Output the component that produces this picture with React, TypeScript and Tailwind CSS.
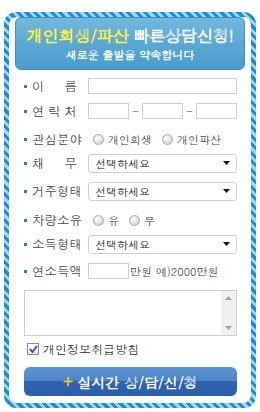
import type { ReactNode } from "react";

const KR = "font-['Dotum','Noto_Sans_CJK_KR','Noto_Sans',sans-serif]";

function Label({ chars }: { chars: string[] }) {
  return (
    <div className="flex w-[64px] shrink-0 items-center">
      <span className="mr-[5px] h-[3px] w-[3px] bg-[#2b7fc7]" />
      <span className="flex w-[45px] justify-between text-[12.5px] leading-none text-[#484848]">
        {chars.map((c, i) => (
          <span key={i}>{c}</span>
        ))}
      </span>
    </div>
  );
}

function Row({ chars, mt, children }: { chars: string[]; mt: string; children: ReactNode }) {
  return (
    <div className={`flex h-[20px] items-center ${mt}`}>
      <Label chars={chars} />
      <div className="flex flex-1 items-center">{children}</div>
    </div>
  );
}

function TextBox({ w }: { w: string }) {
  return <div className={`h-[16px] border border-[#cfcfcf] bg-white ${w}`} />;
}

function Select() {
  return (
    <div className="flex h-[19px] w-full items-center justify-between rounded-[3px] border border-[#cfcfcf] bg-white pl-[6px] pr-[6px]">
      <span className="text-[11px] leading-none text-[#222]">선택하세요</span>
      <svg width="7" height="4" viewBox="0 0 7 4">
        <path d="M0 0h7L3.5 4z" fill="#111" />
      </svg>
    </div>
  );
}

function Radio({ label, gap }: { label: string; gap?: string }) {
  return (
    <div className={`flex items-center ${gap ?? ""}`}>
      <span className="h-[11px] w-[11px] rounded-full border border-[#a8a8a8] bg-[radial-gradient(circle_at_40%_35%,#ffffff,#d8d8d8_70%,#bdbdbd)]" />
      <span className="ml-[4px] text-[11px] leading-none text-[#444]">{label}</span>
    </div>
  );
}

export default function App() {
  return (
    <div className={`relative h-[412px] w-[260px] bg-white ${KR}`}>
      <div className="ml-[4px] mt-[12px] h-[396px] w-[252px] rounded-[12px] bg-[repeating-linear-gradient(45deg,#1a8ed4_0px,#1a8ed4_3px,#9fd4ee_3px,#9fd4ee_6px)] p-[5px]">
        <div className="flex h-full flex-col rounded-[8px] bg-white pl-[15px] pr-[14px] pt-[59px]">
          <Row chars={["이", "름"]} mt="">
            <TextBox w="w-[149px]" />
          </Row>
          <Row chars={["연", "락", "처"]} mt="mt-[5px]">
            <TextBox w="w-[41px]" />
            <span className="w-[13px] text-center text-[11px] leading-none text-[#555]">-</span>
            <TextBox w="w-[41px]" />
            <span className="w-[13px] text-center text-[11px] leading-none text-[#555]">-</span>
            <TextBox w="w-[41px]" />
          </Row>
          <Row chars={["관", "심", "분", "야"]} mt="mt-[8px]">
            <div className="ml-[5px] flex items-center">
              <Radio label="개인회생" />
              <Radio label="개인파산" gap="ml-[10px]" />
            </div>
          </Row>
          <Row chars={["채", "무"]} mt="mt-[4px]">
            <Select />
          </Row>
          <Row chars={["거", "주", "형", "태"]} mt="mt-[8px]">
            <Select />
          </Row>
          <Row chars={["차", "량", "소", "유"]} mt="mt-[9px]">
            <div className="ml-[5px] flex items-center">
              <Radio label="유" />
              <Radio label="무" gap="ml-[10px]" />
            </div>
          </Row>
          <Row chars={["소", "득", "형", "태"]} mt="mt-[4px]">
            <Select />
          </Row>
          <Row chars={["연", "소", "득", "액"]} mt="mt-[7px]">
            <TextBox w="w-[41px]" />
            <span className="ml-[1px] text-[11px] leading-none text-[#444]">만원 예)2000만원</span>
          </Row>
          <div className="mt-[9px] flex h-[46px] border border-[#cfcfcf] bg-white">
            <div className="flex-1" />
            <div className="flex w-[15px] flex-col items-center justify-between bg-[#f0f0f0] py-[5px]">
              <svg width="7" height="4" viewBox="0 0 7 4">
                <path d="M0 4h7L3.5 0z" fill="#a3a3a3" />
              </svg>
              <svg width="7" height="4" viewBox="0 0 7 4">
                <path d="M0 0h7L3.5 4z" fill="#a3a3a3" />
              </svg>
            </div>
          </div>
          <div className="mt-[6px] flex h-[14px] items-center pl-[3px]">
            <span className="flex h-[12px] w-[12px] items-center justify-center border border-[#8a8a8a] bg-[linear-gradient(#ffffff,#e4e4e4)]">
              <svg width="9" height="8" viewBox="0 0 9 8">
                <path d="M1 4l2.5 3L8 1" stroke="#2a4fa8" strokeWidth="1.8" fill="none" />
              </svg>
            </span>
            <span className="ml-[4px] text-[12px] leading-none text-[#333]">개인정보취급방침</span>
          </div>
          <div className="mt-[11px] flex h-[29px] items-center justify-center rounded-[6px] bg-[linear-gradient(#5d95d2_0%,#4b84c6_50%,#2f63ad_50%,#2c5fa9_100%)]">
            <span className="mr-[5px] text-[16px] font-bold leading-none text-[#ffc21a]">+</span>
            <span className="text-[14px] font-bold leading-none text-white">실시간 상/담/신/청</span>
          </div>
        </div>
      </div>
      <div className="absolute left-[15px] top-[5px] flex h-[53px] w-[230px] flex-col items-center justify-center rounded-[6px] border border-[#3f8ec2] bg-[linear-gradient(#74b8de_0%,#5ea9d5_45%,#4b9bcb_100%)]">
        <div className="text-[16.5px] font-bold leading-none tracking-[-0.6px]">
          <span className="text-[#fff23a]">개인회생/파산</span>
          <span className="text-white"> 빠른상담신청!</span>
        </div>
        <div className="mt-[6px] text-[11px] font-bold leading-none text-white">새로운 출발을 약속합니다</div>
      </div>
    </div>
  );
}
